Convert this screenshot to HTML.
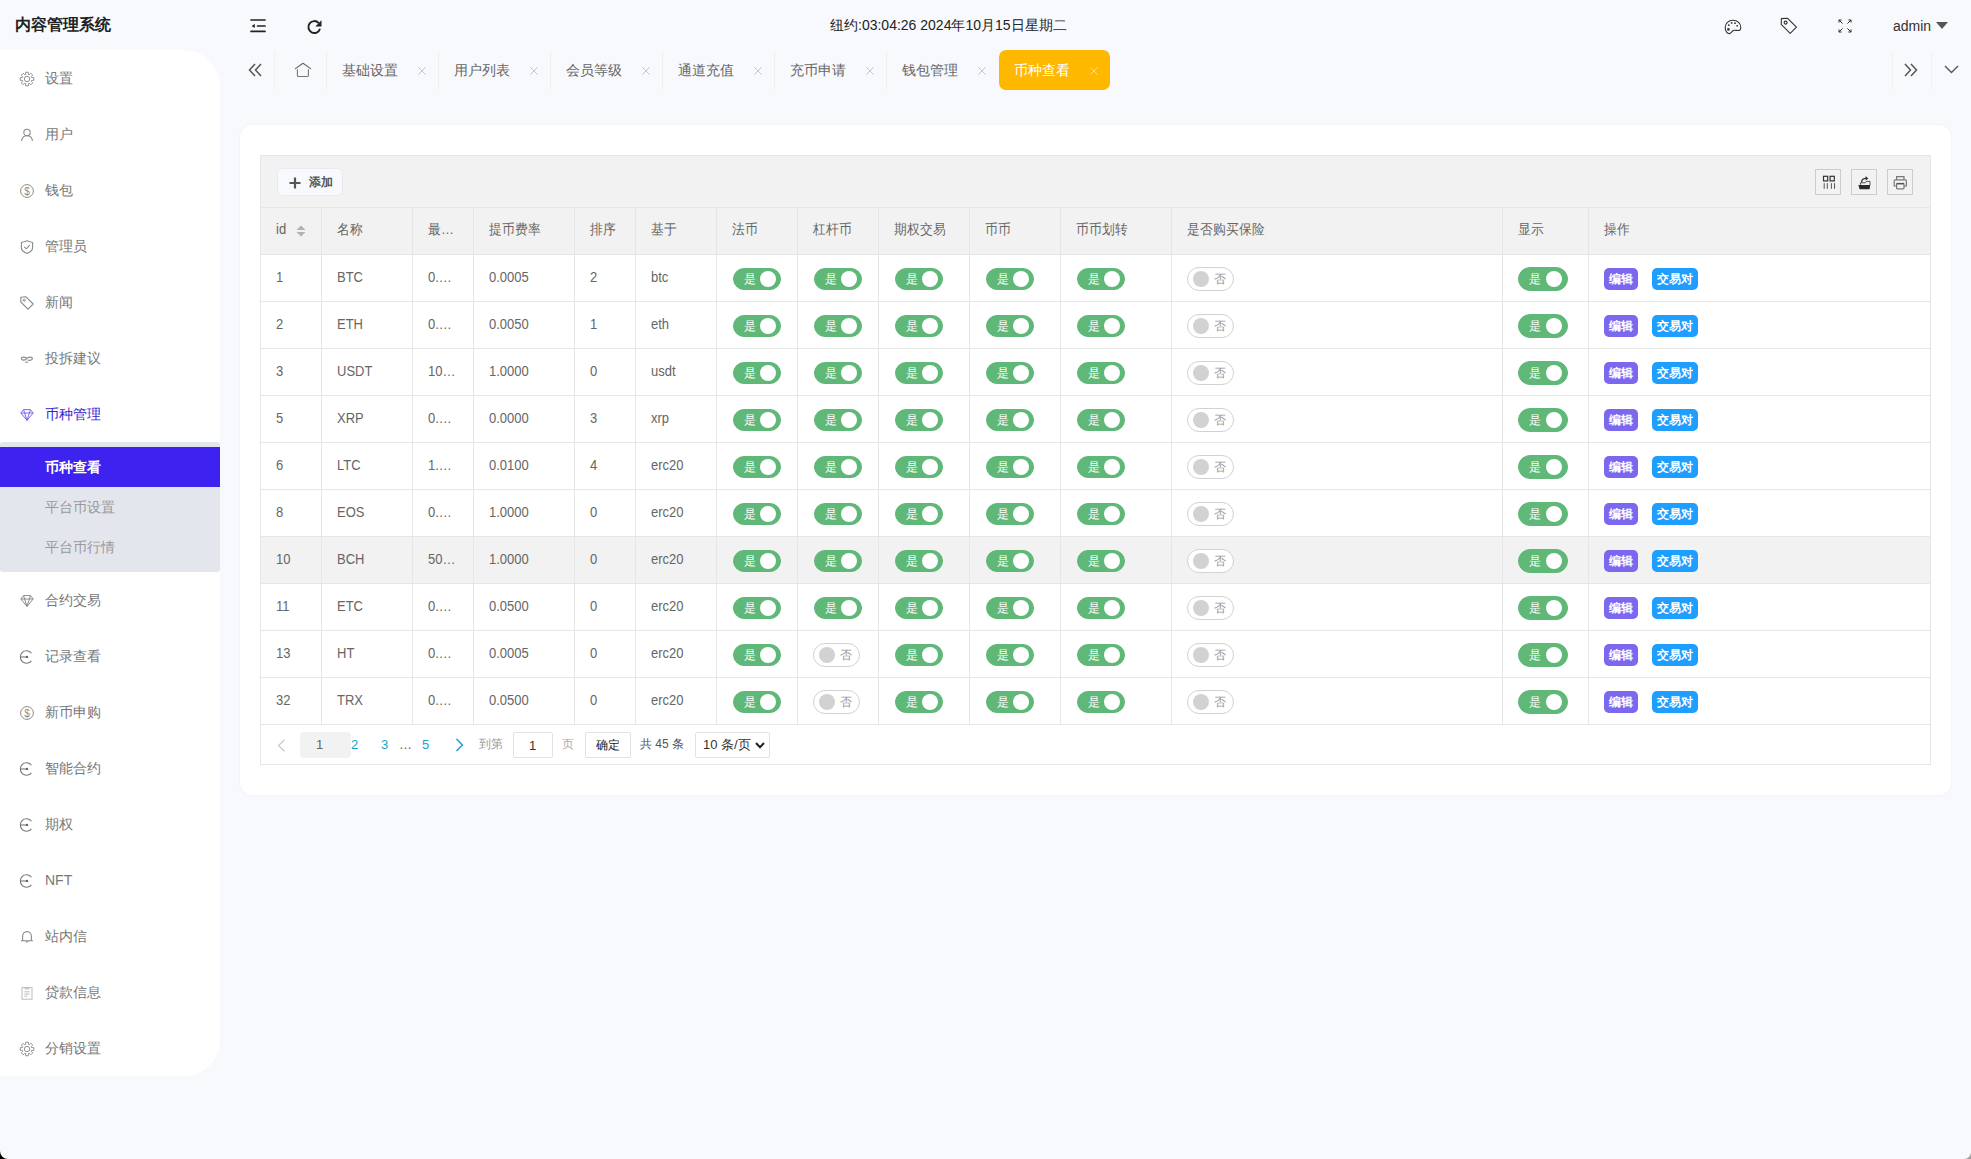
<!DOCTYPE html><html><head><meta charset="utf-8"><style>

html,body{margin:0;padding:0;width:1971px;height:1159px;overflow:hidden;background:linear-gradient(to right,#000 50%,#a0a0a0 50%);font-family:"Liberation Sans", sans-serif;}
#win{position:absolute;left:0;top:0;width:1971px;height:1159px;background:#f8f9fd;border-radius:0 0 7px 8px;overflow:hidden;}
.abs{position:absolute;}
.t{position:absolute;white-space:nowrap;line-height:1;}
svg{position:absolute;overflow:visible;}
#side{position:absolute;left:0;top:50px;width:220px;height:1026px;background:#fff;border-radius:0 36px 36px 0;}
.mi{position:absolute;left:45px;font-size:14px;color:#777;line-height:20px;height:20px;}
.card{position:absolute;left:240px;top:125px;width:1711px;height:670px;background:#fff;border-radius:12px;box-shadow:0 0 2px rgba(0,0,0,0.07);}
.cell{position:absolute;font-size:13px;color:#666;line-height:20px;white-space:nowrap;transform:scaleY(1.1);transform-origin:0 13.5px;}
.hl{position:absolute;background:#e6e6e6;}
.sw{position:absolute;box-sizing:border-box;height:23px;border-radius:12px;}
.on{background:#5fb878;border:1px solid #5fb878;width:48px;height:22px;}
.off{background:#fff;border:1px solid #d2d2d2;width:47px;height:24px;}
.knob{position:absolute;top:3px;width:16px;height:16px;border-radius:50%;}
.on .knob{right:4px;top:2px;background:#fff;}
.off .knob{left:5px;background:#d2d2d2;}
.swt{position:absolute;top:0;font-size:12px;line-height:21px;}
.on .swt{left:10px;color:#fff;line-height:20px;}
.off .swt{left:26px;color:#999;line-height:22px;}
.btn{position:absolute;height:22px;line-height:22px;font-size:12px;color:#fff;font-weight:bold;border-radius:5px;text-align:center;}

</style></head><body><div id="win">
<div class="t" style="left:15px;top:17px;font-size:16px;font-weight:bold;color:#222;">内容管理系统</div>
<svg style="left:250px;top:19px" width="16" height="14" viewBox="0 0 16 14"><g stroke="#222" stroke-width="1.7" stroke-linecap="round"><line x1="1" y1="1" x2="15" y2="1"/><line x1="7.6" y1="7" x2="15" y2="7"/><line x1="1" y1="12.4" x2="15" y2="12.4"/></g><path d="M1.6 7 L4.8 4.9 L4.8 9.1 Z" fill="#222"/></svg>
<svg style="left:305.5px;top:18.5px" width="17" height="17" viewBox="0 0 16 16"><path d="M13.2 9.2 A5.6 5.6 0 1 1 12 3.8" fill="none" stroke="#222" stroke-width="1.8"/><path d="M14.6 1.2 L14.6 7 L8.8 7 Z" fill="#222"/></svg>
<div class="t" style="left:830px;top:18px;font-size:14px;color:#222;">纽约:03:04:26 2024年10月15日星期二</div>
<svg style="left:1724px;top:19px" width="18" height="16" viewBox="0 0 18 16"><path d="M9 1.2 C4.4 1.2 1.2 4.4 1.2 8.4 C1.2 12 3.2 14.6 5.2 14.6 C7.2 14.6 7.6 12 9.6 11.4 C11.4 10.8 13 12 15.2 11.4 C16.8 11 16.8 9.4 16.8 8.4 C16.8 4.4 13.6 1.2 9 1.2 Z" fill="none" stroke="#333" stroke-width="1.1"/><circle cx="4.4" cy="10.4" r="1.3" fill="#333"/><circle cx="4.8" cy="6.2" r="0.9" fill="#333"/><circle cx="7.6" cy="3.9" r="0.9" fill="#333"/><circle cx="11" cy="4.2" r="0.9" fill="#333"/><circle cx="13.2" cy="6.8" r="0.9" fill="#333"/></svg>
<svg style="left:1780px;top:17px" width="18" height="18" viewBox="0 0 18 18"><path d="M1.4 1.6 L7.4 1.2 L16.4 10.2 L10.2 16.4 L1.2 7.4 Z" fill="none" stroke="#333" stroke-width="1.1" stroke-linejoin="round"/><circle cx="5.6" cy="5.6" r="1.5" fill="none" stroke="#333" stroke-width="1.1"/></svg>
<svg style="left:1838px;top:19px" width="14" height="14" viewBox="0 0 14 14"><g stroke="#333" stroke-width="1" fill="none"><path d="M1 1 L4.6 4.6 M1 0.9 L1 3.6 M0.9 1 L3.6 1"/><path d="M13 1 L9.4 4.6 M13 0.9 L13 3.6 M13.1 1 L10.4 1"/><path d="M1 13 L4.6 9.4 M1 13.1 L1 10.4 M0.9 13 L3.6 13"/><path d="M13 13 L9.4 9.4 M13 13.1 L13 10.4 M13.1 13 L10.4 13"/></g></svg>
<div class="t" style="left:1893px;top:19px;font-size:14px;color:#333;">admin</div>
<svg style="left:1936px;top:22px" width="12" height="7" viewBox="0 0 12 7"><path d="M0 0 L12 0 L6 7 Z" fill="#555"/></svg>
<svg style="left:248px;top:63px" width="14" height="14" viewBox="0 0 14 14"><g stroke="#555" stroke-width="1.5" fill="none"><path d="M7 1 L1.5 7 L7 13"/><path d="M13 1 L7.5 7 L13 13"/></g></svg>
<div class="hl" style="left:274px;top:51px;width:1px;height:38px;background:#f0f0f0"></div>
<svg style="left:295px;top:62px" width="16" height="16" viewBox="0 0 16 16"><path d="M0.4 6.6 L8 1.2 L15.6 6.6" fill="none" stroke="#666" stroke-width="1.1" stroke-linecap="round" stroke-linejoin="round"/><path d="M2.4 7.2 L2.4 13.4 Q2.4 14.5 3.5 14.5 L12.3 14.5 Q13.4 14.5 13.4 13.4 L13.4 7.2" fill="none" stroke="#777" stroke-width="1.1"/></svg>
<div class="hl" style="left:326px;top:51px;width:1px;height:38px;background:#f0f0f0"></div>
<div class="t" style="left:342px;top:63px;font-size:14px;color:#666;">基础设置</div>
<svg style="left:418px;top:67px" width="8" height="8" viewBox="0 0 8 8"><path d="M0.4 0.4 L7.6 7.6 M7.6 0.4 L0.4 7.6" stroke="#c4c4c4" stroke-width="1"/></svg>
<div class="hl" style="left:438px;top:51px;width:1px;height:38px;background:#f0f0f0"></div>
<div class="t" style="left:454px;top:63px;font-size:14px;color:#666;">用户列表</div>
<svg style="left:530px;top:67px" width="8" height="8" viewBox="0 0 8 8"><path d="M0.4 0.4 L7.6 7.6 M7.6 0.4 L0.4 7.6" stroke="#c4c4c4" stroke-width="1"/></svg>
<div class="hl" style="left:550px;top:51px;width:1px;height:38px;background:#f0f0f0"></div>
<div class="t" style="left:566px;top:63px;font-size:14px;color:#666;">会员等级</div>
<svg style="left:642px;top:67px" width="8" height="8" viewBox="0 0 8 8"><path d="M0.4 0.4 L7.6 7.6 M7.6 0.4 L0.4 7.6" stroke="#c4c4c4" stroke-width="1"/></svg>
<div class="hl" style="left:662px;top:51px;width:1px;height:38px;background:#f0f0f0"></div>
<div class="t" style="left:678px;top:63px;font-size:14px;color:#666;">通道充值</div>
<svg style="left:754px;top:67px" width="8" height="8" viewBox="0 0 8 8"><path d="M0.4 0.4 L7.6 7.6 M7.6 0.4 L0.4 7.6" stroke="#c4c4c4" stroke-width="1"/></svg>
<div class="hl" style="left:774px;top:51px;width:1px;height:38px;background:#f0f0f0"></div>
<div class="t" style="left:790px;top:63px;font-size:14px;color:#666;">充币申请</div>
<svg style="left:866px;top:67px" width="8" height="8" viewBox="0 0 8 8"><path d="M0.4 0.4 L7.6 7.6 M7.6 0.4 L0.4 7.6" stroke="#c4c4c4" stroke-width="1"/></svg>
<div class="hl" style="left:886px;top:51px;width:1px;height:38px;background:#f0f0f0"></div>
<div class="t" style="left:902px;top:63px;font-size:14px;color:#666;">钱包管理</div>
<svg style="left:978px;top:67px" width="8" height="8" viewBox="0 0 8 8"><path d="M0.4 0.4 L7.6 7.6 M7.6 0.4 L0.4 7.6" stroke="#c4c4c4" stroke-width="1"/></svg>
<div class="abs" style="left:999px;top:50px;width:111px;height:40px;background:#ffb800;border-radius:7px;"></div>
<div class="t" style="left:1014px;top:63px;font-size:14px;color:#fff;">币种查看</div>
<svg style="left:1090px;top:67px" width="8" height="8" viewBox="0 0 8 8"><path d="M0.4 0.4 L7.6 7.6 M7.6 0.4 L0.4 7.6" stroke="#ffdd88" stroke-width="1"/></svg>
<div class="hl" style="left:1892px;top:51px;width:1px;height:38px;background:#f0f0f0"></div>
<div class="hl" style="left:1931px;top:51px;width:1px;height:38px;background:#f0f0f0"></div>
<svg style="left:1904px;top:63px" width="14" height="14" viewBox="0 0 14 14"><g stroke="#555" stroke-width="1.5" fill="none"><path d="M1 1 L6.5 7 L1 13"/><path d="M7 1 L12.5 7 L7 13"/></g></svg>
<svg style="left:1944px;top:65px" width="15" height="9" viewBox="0 0 15 9"><path d="M1 1 L7.5 7.5 L14 1" fill="none" stroke="#555" stroke-width="1.4"/></svg>
<div id="side"></div>
<svg style="left:20px;top:72px" width="14" height="14" viewBox="0 0 14 14"><path d="M5.58 2.41 L5.63 0.24 L8.37 0.24 L8.42 2.41 L9.24 2.75 L10.81 1.25 L12.75 3.19 L11.25 4.76 L11.59 5.58 L13.76 5.63 L13.76 8.37 L11.59 8.42 L11.25 9.24 L12.75 10.81 L10.81 12.75 L9.24 11.25 L8.42 11.59 L8.37 13.76 L5.63 13.76 L5.58 11.59 L4.76 11.25 L3.19 12.75 L1.25 10.81 L2.75 9.24 L2.41 8.42 L0.24 8.37 L0.24 5.63 L2.41 5.58 L2.75 4.76 L1.25 3.19 L3.19 1.25 L4.76 2.75 Z" fill="none" stroke="#888" stroke-width="0.9" stroke-linejoin="miter"/><circle cx="7" cy="7" r="2.7" fill="none" stroke="#888" stroke-width="0.9"/></svg>
<div class="mi" style="top:68px;color:#777">设置</div>
<svg style="left:20px;top:128px" width="14" height="14" viewBox="0 0 14 14"><circle cx="7" cy="4.4" r="3.2" fill="none" stroke="#8a8a8a" stroke-width="1.1"/><path d="M1.6 13 C1.8 9.6 4 7.8 7 7.8 C10 7.8 12.2 9.6 12.4 13" fill="none" stroke="#8a8a8a" stroke-width="1.1"/></svg>
<div class="mi" style="top:124px;color:#777">用户</div>
<svg style="left:20px;top:184px" width="14" height="14" viewBox="0 0 14 14"><circle cx="7" cy="7" r="6.4" fill="none" stroke="#8a8a8a" stroke-width="1"/><text x="7" y="10.6" font-size="10" text-anchor="middle" fill="#8a8a8a" font-family="Liberation Sans">$</text></svg>
<div class="mi" style="top:180px;color:#777">钱包</div>
<svg style="left:20px;top:240px" width="14" height="14" viewBox="0 0 14 14"><path d="M7 0.8 L12.6 2.6 L12.6 7.6 C12.6 10.4 10 12.4 7 13.4 C4 12.4 1.4 10.4 1.4 7.6 L1.4 2.6 Z" fill="none" stroke="#8a8a8a" stroke-width="1.1"/><path d="M4.2 6.8 L6.3 8.8 L9.8 5.2" fill="none" stroke="#8a8a8a" stroke-width="1.1"/></svg>
<div class="mi" style="top:236px;color:#777">管理员</div>
<svg style="left:20px;top:296px" width="14" height="14" viewBox="0 0 14 14"><path d="M0.8 1.2 L6 0.8 L13.2 8 L8 13.2 L0.8 6 Z" fill="none" stroke="#8a8a8a" stroke-width="1.1" stroke-linejoin="round"/><circle cx="4.2" cy="4.2" r="1.1" fill="none" stroke="#8a8a8a" stroke-width="1"/></svg>
<div class="mi" style="top:292px;color:#777">新闻</div>
<svg style="left:20px;top:352px" width="14" height="14" viewBox="0 0 14 14"><path d="M6.8 6.6 C5.6 4.6 1.4 4.6 1.4 6.6 C1.4 8.6 5.6 8.6 6.8 6.6 C8 4.6 12.4 4.6 12.4 6.6 C12.4 8.6 9 8.6 7.6 8" fill="none" stroke="#8a8a8a" stroke-width="1.1"/><line x1="5" y1="10.2" x2="8.2" y2="10.2" stroke="#8a8a8a" stroke-width="1"/></svg>
<div class="mi" style="top:348px;color:#777">投拆建议</div>
<svg style="left:20px;top:408px" width="14" height="14" viewBox="0 0 14 14"><path d="M3.6 1.6 L10.4 1.6 L13.2 5 L7 12.4 L0.8 5 Z M0.8 5 L13.2 5 M4.6 5 L7 12.4 L9.4 5 M3.6 1.6 L4.6 5 M10.4 1.6 L9.4 5" fill="none" stroke="#7b68ee" stroke-width="1" stroke-linejoin="round"/></svg>
<div class="mi" style="top:404px;color:#3525cf">币种管理</div>
<svg style="left:20px;top:594px" width="14" height="14" viewBox="0 0 14 14"><path d="M3.6 1.6 L10.4 1.6 L13.2 5 L7 12.4 L0.8 5 Z M0.8 5 L13.2 5 M4.6 5 L7 12.4 L9.4 5 M3.6 1.6 L4.6 5 M10.4 1.6 L9.4 5" fill="none" stroke="#8a8a8a" stroke-width="1" stroke-linejoin="round"/></svg>
<div class="mi" style="top:590px;color:#777">合约交易</div>
<svg style="left:20px;top:650px" width="14" height="14" viewBox="0 0 14 14"><path d="M11.4 3.2 A6.2 6.2 0 1 0 11.4 10.8" fill="none" stroke="#777" stroke-width="1.1"/><line x1="0.6" y1="7" x2="6.4" y2="7" stroke="#777" stroke-width="1.1"/><circle cx="7" cy="7" r="1.2" fill="#666"/></svg>
<div class="mi" style="top:646px;color:#777">记录查看</div>
<svg style="left:20px;top:706px" width="14" height="14" viewBox="0 0 14 14"><circle cx="7" cy="7" r="6.4" fill="none" stroke="#8a8a8a" stroke-width="1"/><text x="7" y="10.6" font-size="10" text-anchor="middle" fill="#8a8a8a" font-family="Liberation Sans">$</text></svg>
<div class="mi" style="top:702px;color:#777">新币申购</div>
<svg style="left:20px;top:762px" width="14" height="14" viewBox="0 0 14 14"><path d="M11.4 3.2 A6.2 6.2 0 1 0 11.4 10.8" fill="none" stroke="#777" stroke-width="1.1"/><line x1="0.6" y1="7" x2="6.4" y2="7" stroke="#777" stroke-width="1.1"/><circle cx="7" cy="7" r="1.2" fill="#666"/></svg>
<div class="mi" style="top:758px;color:#777">智能合约</div>
<svg style="left:20px;top:818px" width="14" height="14" viewBox="0 0 14 14"><path d="M11.4 3.2 A6.2 6.2 0 1 0 11.4 10.8" fill="none" stroke="#777" stroke-width="1.1"/><line x1="0.6" y1="7" x2="6.4" y2="7" stroke="#777" stroke-width="1.1"/><circle cx="7" cy="7" r="1.2" fill="#666"/></svg>
<div class="mi" style="top:814px;color:#777">期权</div>
<svg style="left:20px;top:874px" width="14" height="14" viewBox="0 0 14 14"><path d="M11.4 3.2 A6.2 6.2 0 1 0 11.4 10.8" fill="none" stroke="#777" stroke-width="1.1"/><line x1="0.6" y1="7" x2="6.4" y2="7" stroke="#777" stroke-width="1.1"/><circle cx="7" cy="7" r="1.2" fill="#666"/></svg>
<div class="mi" style="top:870px;color:#777">NFT</div>
<svg style="left:20px;top:930px" width="14" height="14" viewBox="0 0 14 14"><path d="M2.6 10.6 L2.6 6.4 C2.6 3.6 4.6 1.6 7 1.6 C9.4 1.6 11.4 3.6 11.4 6.4 L11.4 10.6 M1 10.8 L13 10.8" fill="none" stroke="#8a8a8a" stroke-width="1.1"/><path d="M5.8 11 C5.8 12.6 8.2 12.6 8.2 11" fill="none" stroke="#8a8a8a" stroke-width="1"/></svg>
<div class="mi" style="top:926px;color:#777">站内信</div>
<svg style="left:20px;top:986px" width="14" height="14" viewBox="0 0 14 14"><rect x="2" y="1.6" width="10" height="11.6" fill="none" stroke="#bbb" stroke-width="1"/><path d="M5 3 L5 1.6 L9 1.6 L9 3 Z" fill="none" stroke="#bbb" stroke-width="1"/><line x1="4.4" y1="5.8" x2="9.6" y2="5.8" stroke="#bbb" stroke-width="1"/><line x1="4.4" y1="8" x2="9.6" y2="8" stroke="#bbb" stroke-width="1"/><line x1="4.4" y1="10.2" x2="7.4" y2="10.2" stroke="#bbb" stroke-width="1"/></svg>
<div class="mi" style="top:982px;color:#777">贷款信息</div>
<svg style="left:20px;top:1042px" width="14" height="14" viewBox="0 0 14 14"><path d="M5.58 2.41 L5.63 0.24 L8.37 0.24 L8.42 2.41 L9.24 2.75 L10.81 1.25 L12.75 3.19 L11.25 4.76 L11.59 5.58 L13.76 5.63 L13.76 8.37 L11.59 8.42 L11.25 9.24 L12.75 10.81 L10.81 12.75 L9.24 11.25 L8.42 11.59 L8.37 13.76 L5.63 13.76 L5.58 11.59 L4.76 11.25 L3.19 12.75 L1.25 10.81 L2.75 9.24 L2.41 8.42 L0.24 8.37 L0.24 5.63 L2.41 5.58 L2.75 4.76 L1.25 3.19 L3.19 1.25 L4.76 2.75 Z" fill="none" stroke="#888" stroke-width="0.9" stroke-linejoin="miter"/><circle cx="7" cy="7" r="2.7" fill="none" stroke="#888" stroke-width="0.9"/></svg>
<div class="mi" style="top:1038px;color:#777">分销设置</div>
<div class="abs" style="left:0;top:442px;width:220px;height:130px;background:#e4e6ee;border-radius:3px;"></div>
<div class="abs" style="left:0;top:447px;width:220px;height:40px;background:#3d22f0;"></div>
<div class="mi" style="top:457px;color:#fff;font-weight:bold">币种查看</div>
<div class="mi" style="top:497px;color:#999">平台币设置</div>
<div class="mi" style="top:537px;color:#999">平台币行情</div>
<div class="card"></div>
<div class="abs" style="left:260px;top:155px;width:1671px;height:610px;background:#fff;"></div>
<div class="abs" style="left:260px;top:155px;width:1671px;height:99px;background:#f2f2f2;"></div>
<div class="abs" style="left:260px;top:537px;width:1671px;height:46px;background:#f2f2f2;"></div>
<div class="abs" style="left:260px;top:155px;width:1669px;height:608px;border:1px solid #e6e6e6;"></div>
<div class="hl" style="left:260px;top:207px;width:1670px;height:1px"></div>
<div class="hl" style="left:260px;top:254px;width:1670px;height:1px"></div>
<div class="hl" style="left:260px;top:301px;width:1670px;height:1px"></div>
<div class="hl" style="left:260px;top:348px;width:1670px;height:1px"></div>
<div class="hl" style="left:260px;top:395px;width:1670px;height:1px"></div>
<div class="hl" style="left:260px;top:442px;width:1670px;height:1px"></div>
<div class="hl" style="left:260px;top:489px;width:1670px;height:1px"></div>
<div class="hl" style="left:260px;top:536px;width:1670px;height:1px"></div>
<div class="hl" style="left:260px;top:583px;width:1670px;height:1px"></div>
<div class="hl" style="left:260px;top:630px;width:1670px;height:1px"></div>
<div class="hl" style="left:260px;top:677px;width:1670px;height:1px"></div>
<div class="hl" style="left:260px;top:724px;width:1670px;height:1px"></div>
<div class="hl" style="left:321px;top:207px;width:1px;height:517px"></div>
<div class="hl" style="left:412px;top:207px;width:1px;height:517px"></div>
<div class="hl" style="left:473px;top:207px;width:1px;height:517px"></div>
<div class="hl" style="left:574px;top:207px;width:1px;height:517px"></div>
<div class="hl" style="left:635px;top:207px;width:1px;height:517px"></div>
<div class="hl" style="left:716px;top:207px;width:1px;height:517px"></div>
<div class="hl" style="left:797px;top:207px;width:1px;height:517px"></div>
<div class="hl" style="left:878px;top:207px;width:1px;height:517px"></div>
<div class="hl" style="left:969px;top:207px;width:1px;height:517px"></div>
<div class="hl" style="left:1060px;top:207px;width:1px;height:517px"></div>
<div class="hl" style="left:1171px;top:207px;width:1px;height:517px"></div>
<div class="hl" style="left:1502px;top:207px;width:1px;height:517px"></div>
<div class="hl" style="left:1588px;top:207px;width:1px;height:517px"></div>
<div class="cell" style="left:276px;top:220px;">id</div>
<div class="cell" style="left:337px;top:220px;">名称</div>
<div class="cell" style="left:428px;top:220px;">最…</div>
<div class="cell" style="left:489px;top:220px;">提币费率</div>
<div class="cell" style="left:590px;top:220px;">排序</div>
<div class="cell" style="left:651px;top:220px;">基于</div>
<div class="cell" style="left:732px;top:220px;">法币</div>
<div class="cell" style="left:813px;top:220px;">杠杆币</div>
<div class="cell" style="left:894px;top:220px;">期权交易</div>
<div class="cell" style="left:985px;top:220px;">币币</div>
<div class="cell" style="left:1076px;top:220px;">币币划转</div>
<div class="cell" style="left:1187px;top:220px;">是否购买保险</div>
<div class="cell" style="left:1518px;top:220px;">显示</div>
<div class="cell" style="left:1604px;top:220px;">操作</div>
<svg style="left:296px;top:225px" width="10" height="12" viewBox="0 0 10 12"><path d="M5 0.5 L9.5 5 L0.5 5 Z M5 11.5 L9.5 7 L0.5 7 Z" fill="#b2b2b2"/></svg>
<div class="cell" style="left:276px;top:268px;">1</div>
<div class="cell" style="left:337px;top:268px;">BTC</div>
<div class="cell" style="left:428px;top:268px;">0.…</div>
<div class="cell" style="left:489px;top:268px;">0.0005</div>
<div class="cell" style="left:590px;top:268px;">2</div>
<div class="cell" style="left:651px;top:268px;">btc</div>
<div class="sw on" style="left:733px;top:268px"><span class="swt">是</span><i class="knob"></i></div>
<div class="sw on" style="left:814px;top:268px"><span class="swt">是</span><i class="knob"></i></div>
<div class="sw on" style="left:895px;top:268px"><span class="swt">是</span><i class="knob"></i></div>
<div class="sw on" style="left:986px;top:268px"><span class="swt">是</span><i class="knob"></i></div>
<div class="sw on" style="left:1077px;top:268px"><span class="swt">是</span><i class="knob"></i></div>
<div class="sw off" style="left:1187px;top:267px"><i class="knob"></i><span class="swt">否</span></div>
<div class="sw on" style="left:1518px;top:267px;width:50px;height:24px"><span class="swt" style="line-height:22px">是</span><i class="knob" style="top:3px;right:5px"></i></div>
<div class="btn" style="left:1604px;top:268px;width:34px;background:#7b68ee;">编辑</div>
<div class="btn" style="left:1652px;top:268px;width:46px;background:#1e9fff;">交易对</div>
<div class="cell" style="left:276px;top:315px;">2</div>
<div class="cell" style="left:337px;top:315px;">ETH</div>
<div class="cell" style="left:428px;top:315px;">0.…</div>
<div class="cell" style="left:489px;top:315px;">0.0050</div>
<div class="cell" style="left:590px;top:315px;">1</div>
<div class="cell" style="left:651px;top:315px;">eth</div>
<div class="sw on" style="left:733px;top:315px"><span class="swt">是</span><i class="knob"></i></div>
<div class="sw on" style="left:814px;top:315px"><span class="swt">是</span><i class="knob"></i></div>
<div class="sw on" style="left:895px;top:315px"><span class="swt">是</span><i class="knob"></i></div>
<div class="sw on" style="left:986px;top:315px"><span class="swt">是</span><i class="knob"></i></div>
<div class="sw on" style="left:1077px;top:315px"><span class="swt">是</span><i class="knob"></i></div>
<div class="sw off" style="left:1187px;top:314px"><i class="knob"></i><span class="swt">否</span></div>
<div class="sw on" style="left:1518px;top:314px;width:50px;height:24px"><span class="swt" style="line-height:22px">是</span><i class="knob" style="top:3px;right:5px"></i></div>
<div class="btn" style="left:1604px;top:315px;width:34px;background:#7b68ee;">编辑</div>
<div class="btn" style="left:1652px;top:315px;width:46px;background:#1e9fff;">交易对</div>
<div class="cell" style="left:276px;top:362px;">3</div>
<div class="cell" style="left:337px;top:362px;">USDT</div>
<div class="cell" style="left:428px;top:362px;">10…</div>
<div class="cell" style="left:489px;top:362px;">1.0000</div>
<div class="cell" style="left:590px;top:362px;">0</div>
<div class="cell" style="left:651px;top:362px;">usdt</div>
<div class="sw on" style="left:733px;top:362px"><span class="swt">是</span><i class="knob"></i></div>
<div class="sw on" style="left:814px;top:362px"><span class="swt">是</span><i class="knob"></i></div>
<div class="sw on" style="left:895px;top:362px"><span class="swt">是</span><i class="knob"></i></div>
<div class="sw on" style="left:986px;top:362px"><span class="swt">是</span><i class="knob"></i></div>
<div class="sw on" style="left:1077px;top:362px"><span class="swt">是</span><i class="knob"></i></div>
<div class="sw off" style="left:1187px;top:361px"><i class="knob"></i><span class="swt">否</span></div>
<div class="sw on" style="left:1518px;top:361px;width:50px;height:24px"><span class="swt" style="line-height:22px">是</span><i class="knob" style="top:3px;right:5px"></i></div>
<div class="btn" style="left:1604px;top:362px;width:34px;background:#7b68ee;">编辑</div>
<div class="btn" style="left:1652px;top:362px;width:46px;background:#1e9fff;">交易对</div>
<div class="cell" style="left:276px;top:409px;">5</div>
<div class="cell" style="left:337px;top:409px;">XRP</div>
<div class="cell" style="left:428px;top:409px;">0.…</div>
<div class="cell" style="left:489px;top:409px;">0.0000</div>
<div class="cell" style="left:590px;top:409px;">3</div>
<div class="cell" style="left:651px;top:409px;">xrp</div>
<div class="sw on" style="left:733px;top:409px"><span class="swt">是</span><i class="knob"></i></div>
<div class="sw on" style="left:814px;top:409px"><span class="swt">是</span><i class="knob"></i></div>
<div class="sw on" style="left:895px;top:409px"><span class="swt">是</span><i class="knob"></i></div>
<div class="sw on" style="left:986px;top:409px"><span class="swt">是</span><i class="knob"></i></div>
<div class="sw on" style="left:1077px;top:409px"><span class="swt">是</span><i class="knob"></i></div>
<div class="sw off" style="left:1187px;top:408px"><i class="knob"></i><span class="swt">否</span></div>
<div class="sw on" style="left:1518px;top:408px;width:50px;height:24px"><span class="swt" style="line-height:22px">是</span><i class="knob" style="top:3px;right:5px"></i></div>
<div class="btn" style="left:1604px;top:409px;width:34px;background:#7b68ee;">编辑</div>
<div class="btn" style="left:1652px;top:409px;width:46px;background:#1e9fff;">交易对</div>
<div class="cell" style="left:276px;top:456px;">6</div>
<div class="cell" style="left:337px;top:456px;">LTC</div>
<div class="cell" style="left:428px;top:456px;">1.…</div>
<div class="cell" style="left:489px;top:456px;">0.0100</div>
<div class="cell" style="left:590px;top:456px;">4</div>
<div class="cell" style="left:651px;top:456px;">erc20</div>
<div class="sw on" style="left:733px;top:456px"><span class="swt">是</span><i class="knob"></i></div>
<div class="sw on" style="left:814px;top:456px"><span class="swt">是</span><i class="knob"></i></div>
<div class="sw on" style="left:895px;top:456px"><span class="swt">是</span><i class="knob"></i></div>
<div class="sw on" style="left:986px;top:456px"><span class="swt">是</span><i class="knob"></i></div>
<div class="sw on" style="left:1077px;top:456px"><span class="swt">是</span><i class="knob"></i></div>
<div class="sw off" style="left:1187px;top:455px"><i class="knob"></i><span class="swt">否</span></div>
<div class="sw on" style="left:1518px;top:455px;width:50px;height:24px"><span class="swt" style="line-height:22px">是</span><i class="knob" style="top:3px;right:5px"></i></div>
<div class="btn" style="left:1604px;top:456px;width:34px;background:#7b68ee;">编辑</div>
<div class="btn" style="left:1652px;top:456px;width:46px;background:#1e9fff;">交易对</div>
<div class="cell" style="left:276px;top:503px;">8</div>
<div class="cell" style="left:337px;top:503px;">EOS</div>
<div class="cell" style="left:428px;top:503px;">0.…</div>
<div class="cell" style="left:489px;top:503px;">1.0000</div>
<div class="cell" style="left:590px;top:503px;">0</div>
<div class="cell" style="left:651px;top:503px;">erc20</div>
<div class="sw on" style="left:733px;top:503px"><span class="swt">是</span><i class="knob"></i></div>
<div class="sw on" style="left:814px;top:503px"><span class="swt">是</span><i class="knob"></i></div>
<div class="sw on" style="left:895px;top:503px"><span class="swt">是</span><i class="knob"></i></div>
<div class="sw on" style="left:986px;top:503px"><span class="swt">是</span><i class="knob"></i></div>
<div class="sw on" style="left:1077px;top:503px"><span class="swt">是</span><i class="knob"></i></div>
<div class="sw off" style="left:1187px;top:502px"><i class="knob"></i><span class="swt">否</span></div>
<div class="sw on" style="left:1518px;top:502px;width:50px;height:24px"><span class="swt" style="line-height:22px">是</span><i class="knob" style="top:3px;right:5px"></i></div>
<div class="btn" style="left:1604px;top:503px;width:34px;background:#7b68ee;">编辑</div>
<div class="btn" style="left:1652px;top:503px;width:46px;background:#1e9fff;">交易对</div>
<div class="cell" style="left:276px;top:550px;">10</div>
<div class="cell" style="left:337px;top:550px;">BCH</div>
<div class="cell" style="left:428px;top:550px;">50…</div>
<div class="cell" style="left:489px;top:550px;">1.0000</div>
<div class="cell" style="left:590px;top:550px;">0</div>
<div class="cell" style="left:651px;top:550px;">erc20</div>
<div class="sw on" style="left:733px;top:550px"><span class="swt">是</span><i class="knob"></i></div>
<div class="sw on" style="left:814px;top:550px"><span class="swt">是</span><i class="knob"></i></div>
<div class="sw on" style="left:895px;top:550px"><span class="swt">是</span><i class="knob"></i></div>
<div class="sw on" style="left:986px;top:550px"><span class="swt">是</span><i class="knob"></i></div>
<div class="sw on" style="left:1077px;top:550px"><span class="swt">是</span><i class="knob"></i></div>
<div class="sw off" style="left:1187px;top:549px"><i class="knob"></i><span class="swt">否</span></div>
<div class="sw on" style="left:1518px;top:549px;width:50px;height:24px"><span class="swt" style="line-height:22px">是</span><i class="knob" style="top:3px;right:5px"></i></div>
<div class="btn" style="left:1604px;top:550px;width:34px;background:#7b68ee;">编辑</div>
<div class="btn" style="left:1652px;top:550px;width:46px;background:#1e9fff;">交易对</div>
<div class="cell" style="left:276px;top:597px;">11</div>
<div class="cell" style="left:337px;top:597px;">ETC</div>
<div class="cell" style="left:428px;top:597px;">0.…</div>
<div class="cell" style="left:489px;top:597px;">0.0500</div>
<div class="cell" style="left:590px;top:597px;">0</div>
<div class="cell" style="left:651px;top:597px;">erc20</div>
<div class="sw on" style="left:733px;top:597px"><span class="swt">是</span><i class="knob"></i></div>
<div class="sw on" style="left:814px;top:597px"><span class="swt">是</span><i class="knob"></i></div>
<div class="sw on" style="left:895px;top:597px"><span class="swt">是</span><i class="knob"></i></div>
<div class="sw on" style="left:986px;top:597px"><span class="swt">是</span><i class="knob"></i></div>
<div class="sw on" style="left:1077px;top:597px"><span class="swt">是</span><i class="knob"></i></div>
<div class="sw off" style="left:1187px;top:596px"><i class="knob"></i><span class="swt">否</span></div>
<div class="sw on" style="left:1518px;top:596px;width:50px;height:24px"><span class="swt" style="line-height:22px">是</span><i class="knob" style="top:3px;right:5px"></i></div>
<div class="btn" style="left:1604px;top:597px;width:34px;background:#7b68ee;">编辑</div>
<div class="btn" style="left:1652px;top:597px;width:46px;background:#1e9fff;">交易对</div>
<div class="cell" style="left:276px;top:644px;">13</div>
<div class="cell" style="left:337px;top:644px;">HT</div>
<div class="cell" style="left:428px;top:644px;">0.…</div>
<div class="cell" style="left:489px;top:644px;">0.0005</div>
<div class="cell" style="left:590px;top:644px;">0</div>
<div class="cell" style="left:651px;top:644px;">erc20</div>
<div class="sw on" style="left:733px;top:644px"><span class="swt">是</span><i class="knob"></i></div>
<div class="sw off" style="left:813px;top:643px"><i class="knob"></i><span class="swt">否</span></div>
<div class="sw on" style="left:895px;top:644px"><span class="swt">是</span><i class="knob"></i></div>
<div class="sw on" style="left:986px;top:644px"><span class="swt">是</span><i class="knob"></i></div>
<div class="sw on" style="left:1077px;top:644px"><span class="swt">是</span><i class="knob"></i></div>
<div class="sw off" style="left:1187px;top:643px"><i class="knob"></i><span class="swt">否</span></div>
<div class="sw on" style="left:1518px;top:643px;width:50px;height:24px"><span class="swt" style="line-height:22px">是</span><i class="knob" style="top:3px;right:5px"></i></div>
<div class="btn" style="left:1604px;top:644px;width:34px;background:#7b68ee;">编辑</div>
<div class="btn" style="left:1652px;top:644px;width:46px;background:#1e9fff;">交易对</div>
<div class="cell" style="left:276px;top:691px;">32</div>
<div class="cell" style="left:337px;top:691px;">TRX</div>
<div class="cell" style="left:428px;top:691px;">0.…</div>
<div class="cell" style="left:489px;top:691px;">0.0500</div>
<div class="cell" style="left:590px;top:691px;">0</div>
<div class="cell" style="left:651px;top:691px;">erc20</div>
<div class="sw on" style="left:733px;top:691px"><span class="swt">是</span><i class="knob"></i></div>
<div class="sw off" style="left:813px;top:690px"><i class="knob"></i><span class="swt">否</span></div>
<div class="sw on" style="left:895px;top:691px"><span class="swt">是</span><i class="knob"></i></div>
<div class="sw on" style="left:986px;top:691px"><span class="swt">是</span><i class="knob"></i></div>
<div class="sw on" style="left:1077px;top:691px"><span class="swt">是</span><i class="knob"></i></div>
<div class="sw off" style="left:1187px;top:690px"><i class="knob"></i><span class="swt">否</span></div>
<div class="sw on" style="left:1518px;top:690px;width:50px;height:24px"><span class="swt" style="line-height:22px">是</span><i class="knob" style="top:3px;right:5px"></i></div>
<div class="btn" style="left:1604px;top:691px;width:34px;background:#7b68ee;">编辑</div>
<div class="btn" style="left:1652px;top:691px;width:46px;background:#1e9fff;">交易对</div>
<div class="abs" style="left:277px;top:168px;width:64px;height:26px;background:#f8f9fc;border:1px solid #e8eaf0;border-radius:5px;"></div>
<svg style="left:289px;top:177px" width="12" height="12" viewBox="0 0 12 12"><path d="M6 0.5 L6 11.5 M0.5 6 L11.5 6" stroke="#555" stroke-width="2.2"/></svg>
<div class="t" style="left:309px;top:176px;font-size:12px;font-weight:bold;color:#555;">添加</div>
<div class="abs" style="left:1815px;top:169px;width:24px;height:24px;border:1px solid #ccc;"></div>
<div class="abs" style="left:1851px;top:169px;width:24px;height:24px;border:1px solid #ccc;"></div>
<div class="abs" style="left:1887px;top:169px;width:24px;height:24px;border:1px solid #ccc;"></div>
<svg style="left:1822px;top:175px" width="14" height="15" viewBox="0 0 14 15"><rect x="1.5" y="1.3" width="4.2" height="4.6" fill="none" stroke="#333" stroke-width="1.2"/><rect x="8.1" y="1.3" width="4.2" height="4.6" fill="none" stroke="#333" stroke-width="1.2"/><g stroke="#555" stroke-width="1"><line x1="2.2" y1="8.2" x2="2.2" y2="13.8"/><line x1="5.3" y1="8.2" x2="5.3" y2="13.8"/><line x1="9.4" y1="8.2" x2="9.4" y2="13.8"/><line x1="12.5" y1="8.2" x2="12.5" y2="13.8"/></g></svg>
<svg style="left:1858px;top:175px" width="14" height="15" viewBox="0 0 14 15"><path d="M0.4 10 L12.2 10 L11.6 14.2 L1.6 14.2 Z" fill="#2a2a2a"/><path d="M2.4 9.8 L2.4 7.8 L7.4 7.8 L8.2 6.4 L12 6.4 L12 10" fill="none" stroke="#444" stroke-width="0.9"/><path d="M3.6 7.4 C3.6 4.6 5.4 3.4 8 3.4" fill="none" stroke="#333" stroke-width="1.3"/><path d="M7.6 1 L10.4 3.4 L7.6 5.6 Z" fill="#333"/></svg>
<svg style="left:1893px;top:175px" width="15" height="15" viewBox="0 0 15 15"><path d="M3.6 4.8 L3.6 1.6 L11 1.6 L11 4.8 M3.6 11 L1.2 11 L1.2 5.8 C1.2 5.2 1.6 4.8 2.2 4.8 L12.4 4.8 C13 4.8 13.4 5.2 13.4 5.8 L13.4 11 L11 11" fill="none" stroke="#777" stroke-width="1.2"/><rect x="3.6" y="8.6" width="7.4" height="5.2" rx="0.8" fill="none" stroke="#777" stroke-width="1.2"/><line x1="3.6" y1="8.6" x2="11" y2="8.6" stroke="#555" stroke-width="1.4"/></svg>
<svg style="left:277px;top:739px" width="9" height="13" viewBox="0 0 9 13"><path d="M7.5 0.8 L1.6 6.5 L7.5 12.2" fill="none" stroke="#ccc" stroke-width="1.4"/></svg>
<div class="abs" style="left:300px;top:732px;width:51px;height:26px;background:#f2f2f2;border-radius:4px;"></div>
<div class="t" style="left:316px;top:738px;font-size:13px;color:#666;">1</div>
<div class="t" style="left:351px;top:738px;font-size:13px;color:#1e9fcf;">2</div>
<div class="t" style="left:381px;top:738px;font-size:13px;color:#1e9fcf;">3</div>
<div class="t" style="left:399px;top:738px;font-size:13px;color:#555;">…</div>
<div class="t" style="left:422px;top:738px;font-size:13px;color:#1e9fcf;">5</div>
<svg style="left:455px;top:738px" width="9" height="14" viewBox="0 0 9 14"><path d="M1.5 1 L7.4 7 L1.5 13" fill="none" stroke="#1e9fcf" stroke-width="1.5"/></svg>
<div class="t" style="left:479px;top:738px;font-size:12px;color:#999;">到第</div>
<div class="abs" style="left:513px;top:732px;width:38px;height:24px;border:1px solid #e2e2e2;border-radius:2px;background:#fff"></div>
<div class="t" style="left:529px;top:739px;font-size:13px;color:#333;">1</div>
<div class="t" style="left:562px;top:738px;font-size:12px;color:#aaa;">页</div>
<div class="abs" style="left:585px;top:732px;width:44px;height:24px;border:1px solid #e2e2e2;border-radius:2px;background:#fff"></div>
<div class="t" style="left:596px;top:739px;font-size:12px;color:#222;">确定</div>
<div class="t" style="left:640px;top:738px;font-size:12px;color:#555;">共 45 条</div>
<div class="abs" style="left:695px;top:732px;width:73px;height:24px;border:1px solid #e2e2e2;border-radius:2px;background:#fff"></div>
<div class="t" style="left:703px;top:738px;font-size:13px;color:#333;">10 条/页</div>
<svg style="left:755px;top:742px" width="10" height="7" viewBox="0 0 10 7"><path d="M1 1 L5 5.2 L9 1" fill="none" stroke="#222" stroke-width="2"/></svg>
</div></body></html>
